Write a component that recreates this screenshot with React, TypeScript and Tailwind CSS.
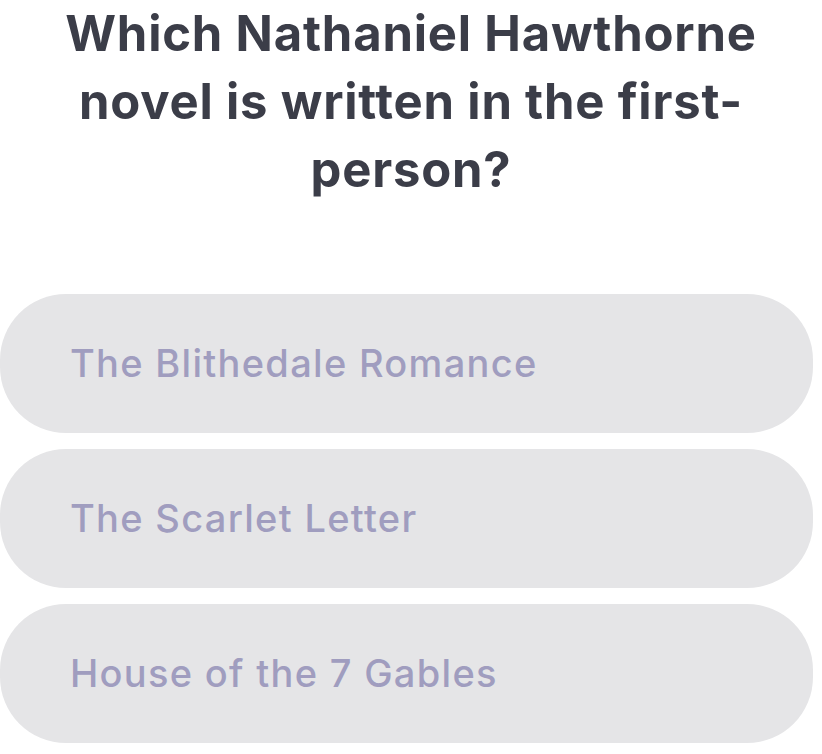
import React from "react";

const answers = ["The Blithedale Romance", "The Scarlet Letter", "House of the 7 Gables"];

export default function App() {
  return (
    <div className="w-[822px] h-[754px] bg-white overflow-hidden font-['Inter','Noto_Sans',sans-serif]">
      <h1 className="mx-auto w-[780px] text-center text-[49px] leading-[68px] font-bold text-[#3b3d48] tracking-[0.8px]">
        Which Nathaniel Hawthorne novel is written in the first-person?
      </h1>
      <div className="mt-[90px] flex flex-col gap-[16px] pr-[9px]">
        {answers.map((a) => (
          <div
            key={a}
            className="h-[139px] rounded-[66px] bg-[#e5e5e7] flex items-center pl-[70px] text-[38px] font-medium tracking-[1.3px] text-[#a09dbf]"
          >
            {a}
          </div>
        ))}
      </div>
    </div>
  );
}
